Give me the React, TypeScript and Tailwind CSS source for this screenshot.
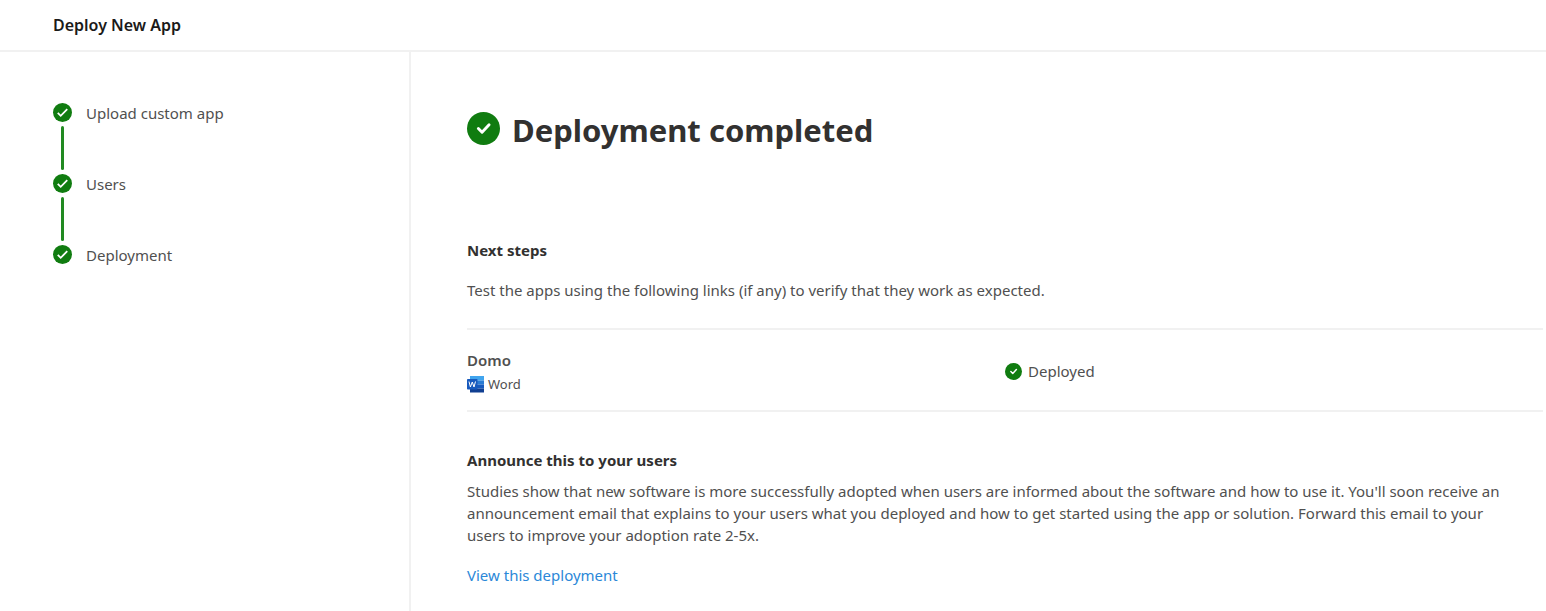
import React from "react";
import clsx from "clsx";

const STEPS = ["Upload custom app", "Users", "Deployment"];

const DEPLOYMENTS = [{ name: "Domo", host: "Word", status: "Deployed" }];

// Step markers use the wide tick, the heading and the table rows the compact one
function CheckBadge({ className, compact = false }: { className: string; compact?: boolean }) {
  return (
    <svg viewBox="0 0 32 32" className={clsx("shrink-0", className)} aria-hidden="true">
      <circle cx="16" cy="16" r="16" fill="#107c10" />
      <path
        d={compact ? "M11 16l3.6 3.6 6.8-7.2" : "M8 16.5l5 5 11-11"}
        fill="none"
        stroke="#fff"
        strokeWidth={compact ? 2.8 : 3}
        strokeLinecap={compact ? "round" : "butt"}
        strokeLinejoin={compact ? "round" : "miter"}
      />
    </svg>
  );
}

function WordIcon() {
  return (
    <svg viewBox="0 0 34 34" className="w-[17px] h-[17px] shrink-0" aria-hidden="true">
      <rect x="6" y="0" width="28" height="9" fill="#41a5ee" />
      <rect x="6" y="9" width="28" height="8" fill="#2b7cd3" />
      <rect x="6" y="17" width="28" height="8" fill="#185abd" />
      <rect x="6" y="25" width="28" height="8" fill="#103f91" />
      <rect x="0" y="6" width="21" height="21" rx="1.5" fill="#185abd" />
      <path d="M4 11l2.8 11L10.5 12 14 22 17 11" fill="none" stroke="#fff" strokeWidth="2" />
    </svg>
  );
}

export default function App() {
  return (
    <div className="min-h-screen flex flex-col bg-white text-[15px] text-[#505050] font-['Noto_Sans','Open_Sans',sans-serif]">
      <header className="h-[52px] px-[53px] flex items-center border-b-2 border-[#f1f1f1]">
        <h1 className="text-base font-semibold text-[#1b1a19]">Deploy New App</h1>
      </header>

      <div className="flex flex-1">
        <aside className="w-[411px] shrink-0 border-r-2 border-[#f1f1f1] px-[53px] pt-[51px]">
          <ol>
            {STEPS.map((step, i) => (
              <li key={step} className="flex gap-3.5">
                <div className="flex flex-col items-center">
                  <CheckBadge className="w-[19px] h-[19px]" />
                  {i < STEPS.length - 1 && <span className="w-[3px] h-11 my-1 rounded-full bg-[#218a21]" />}
                </div>
                <span className="leading-5">{step}</span>
              </li>
            ))}
          </ol>
        </aside>

        <main className="flex-1 min-w-0 pl-14 pr-[3px] pt-14">
          <div className="flex items-start gap-3">
            <CheckBadge className="mt-1 w-[33px] h-[33px]" compact />
            <h2 className="text-[31px] leading-[44px] font-bold text-[#323130]">Deployment completed</h2>
          </div>

          <section className="mt-[87px]">
            <h3 className="leading-[22px] font-bold text-[#323130]">Next steps</h3>
            <p className="mt-[18px] leading-[22px]">
              Test the apps using the following links (if any) to verify that they work as expected.
            </p>

            <table className="w-full mt-[27px] table-fixed border-y-2 border-[#f1f1f1] text-left">
              <tbody>
                {DEPLOYMENTS.map(d => (
                  <tr key={d.name} className="h-[82px]">
                    <th scope="row" className="p-0 pt-1 font-normal">
                      <div className="font-semibold leading-[22px]">{d.name}</div>
                      <div className="mt-[2px] flex items-center gap-1 text-[13px] leading-[22px]">
                        <WordIcon />
                        {d.host}
                      </div>
                    </th>
                    <td className="p-0 pt-[2px]">
                      <div className="flex items-center gap-1.5">
                        <CheckBadge className="w-[17px] h-[17px]" compact />
                        {d.status}
                      </div>
                    </td>
                  </tr>
                ))}
              </tbody>
            </table>
          </section>

          <section className="mt-[37px]">
            <h3 className="leading-[22px] font-bold text-[#323130]">Announce this to your users</h3>
            <p className="mt-[9px] pr-6 leading-[22px]">
              Studies show that new software is more successfully adopted when users are informed about the software
              and how to use it. You'll soon receive an announcement email that explains to your users what you
              deployed and how to get started using the app or solution. Forward this email to your users to improve
              your adoption rate 2-5x.
            </p>
            <a href="#deployment" className="inline-block mt-[18px] leading-[22px] text-[#2b88d8] hover:underline">
              View this deployment
            </a>
          </section>
        </main>
      </div>
    </div>
  );
}
